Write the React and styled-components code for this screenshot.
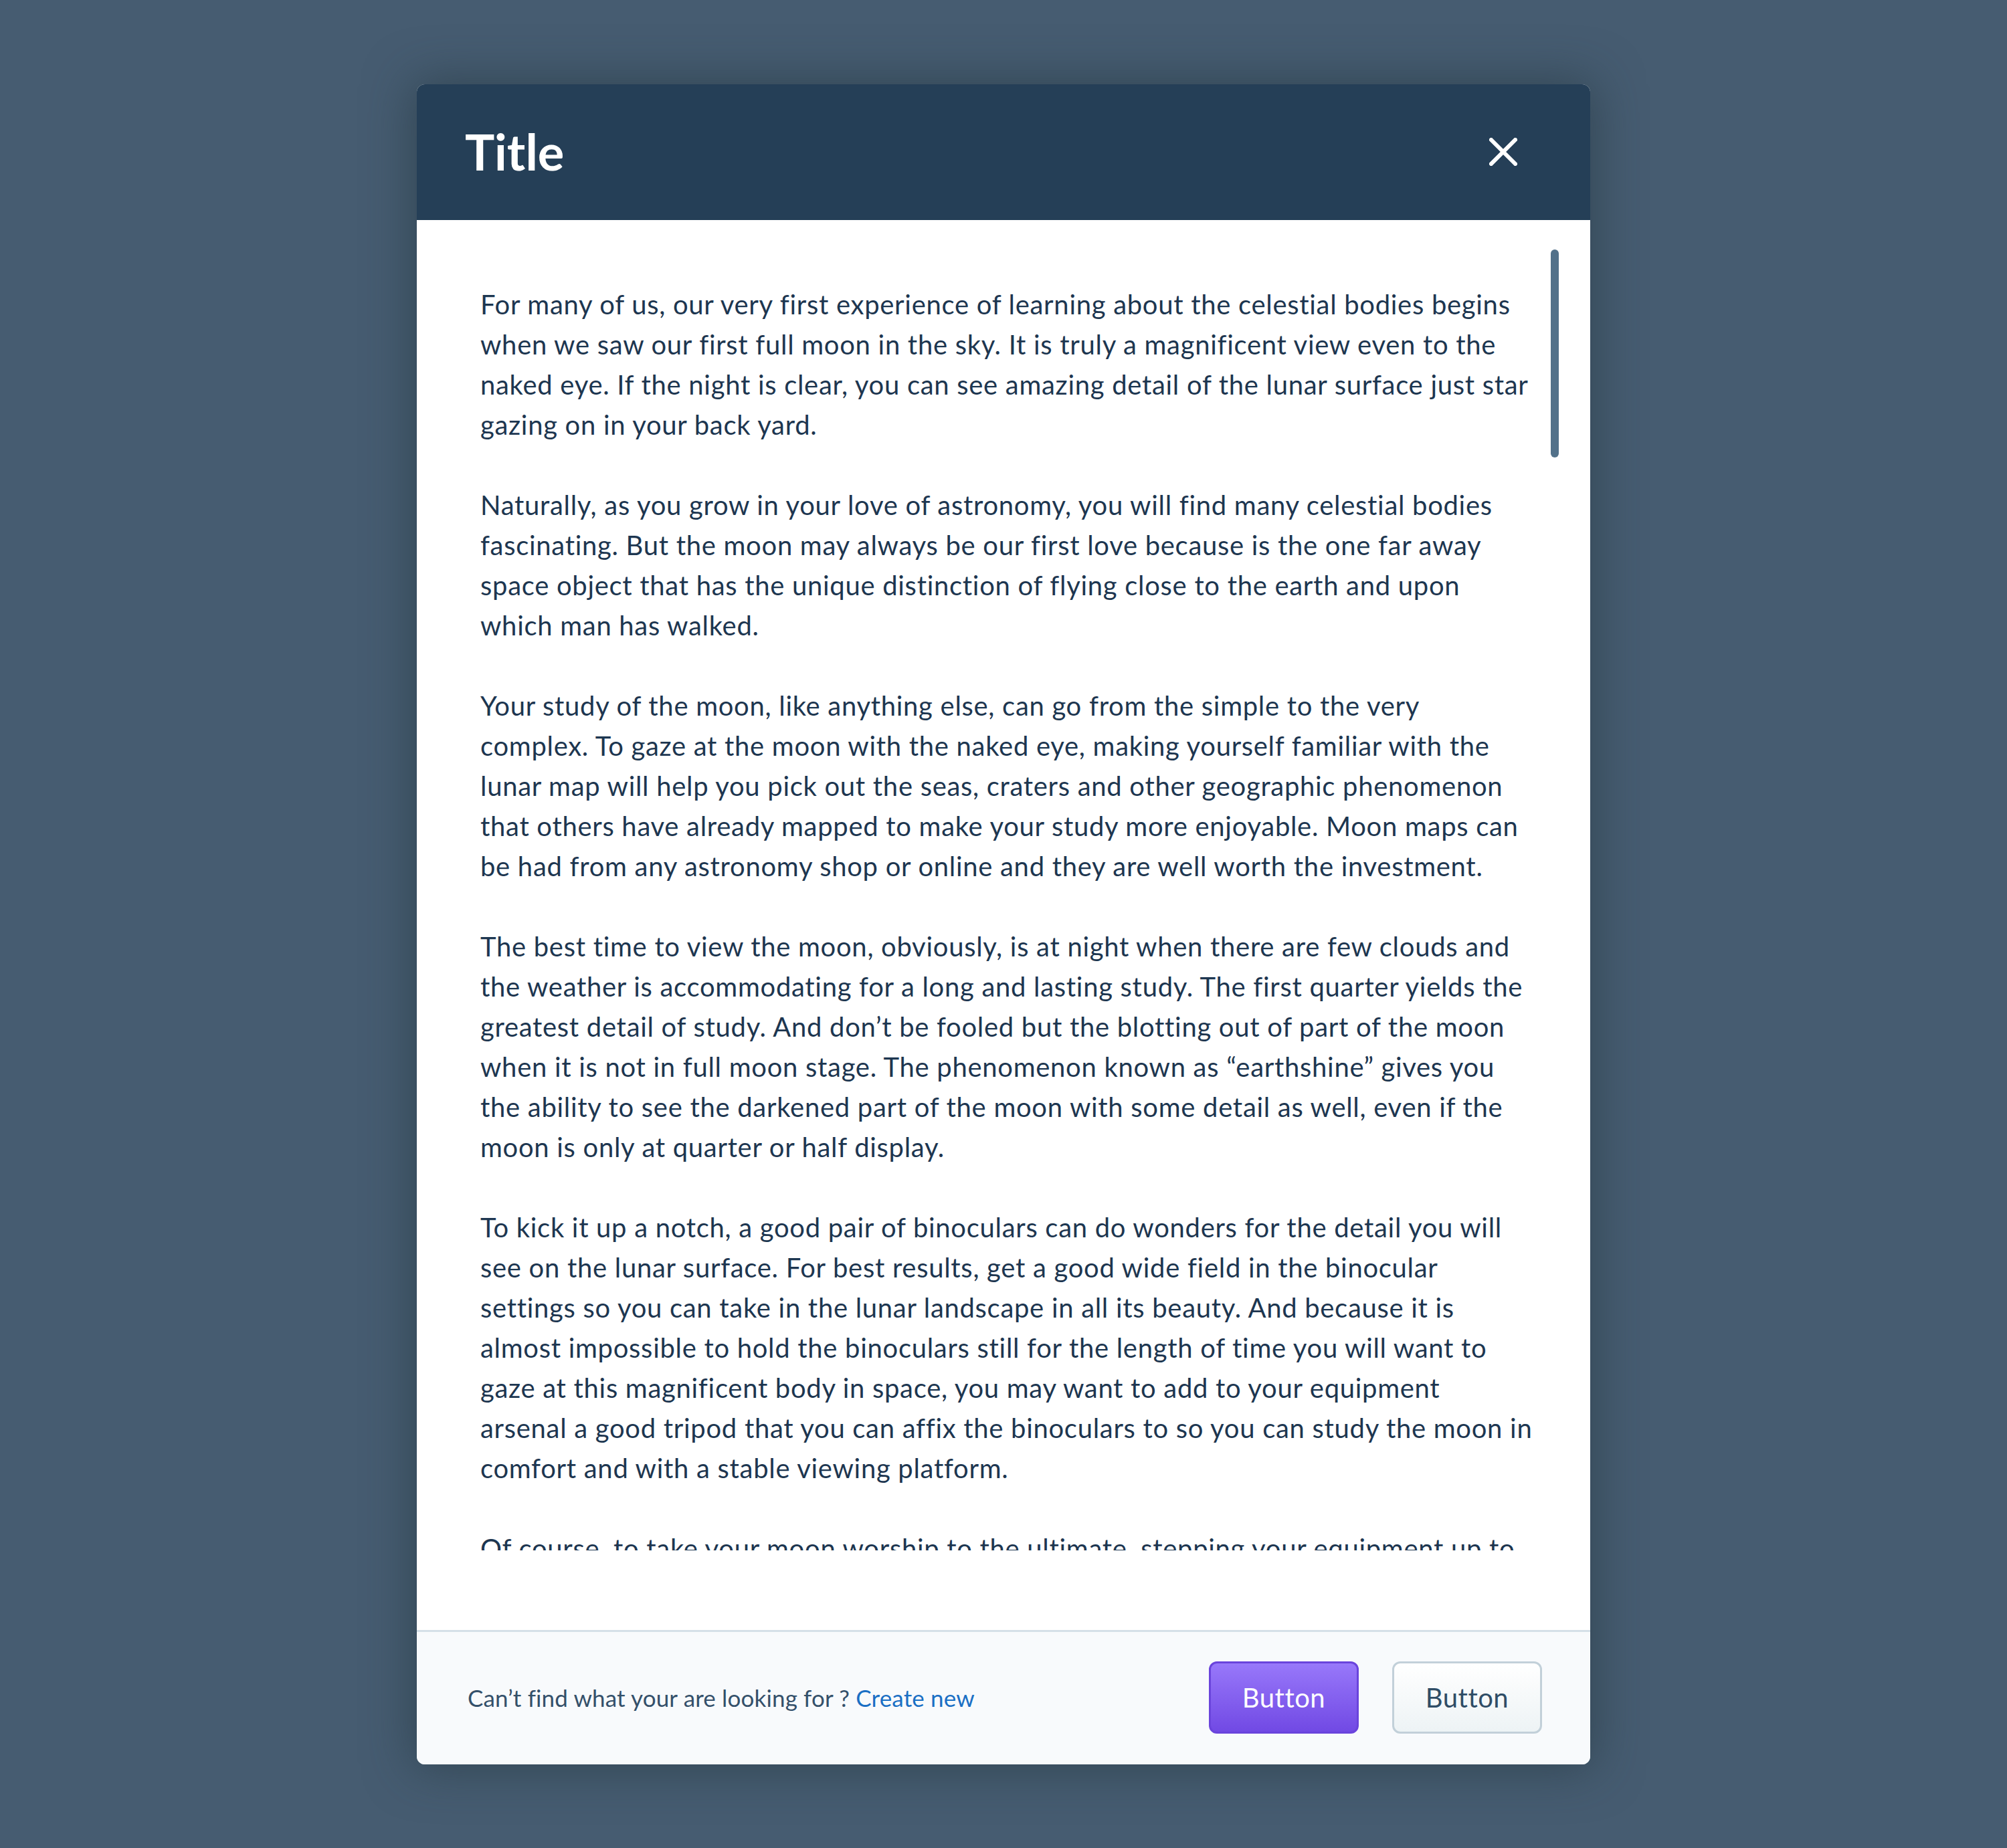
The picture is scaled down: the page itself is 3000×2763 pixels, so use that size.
import React from 'react';
import styled, { createGlobalStyle } from 'styled-components';

const GlobalStyle = createGlobalStyle`
    html, body {
        margin: 0;
        padding: 0;
    }
    body {
        background: #465c71;
        font-family: Lato, "Open Sans", sans-serif;
    }
`;

const Page = styled.div`
    display: flex;
    align-items: center;
    justify-content: center;
    width: 3000px;
    height: 2763px;
    background: #465c71;
`;

const Dialog = styled.section`
    display: flex;
    flex-direction: column;
    width: 1754px;
    height: 2512px;
    border-radius: 12px;
    overflow: hidden;
    background: #fff;
    box-shadow: 0 0 70px 6px rgba(34, 52, 60, 0.55);
`;

const Header = styled.header`
    display: flex;
    align-items: center;
    justify-content: space-between;
    flex: none;
    height: 203px;
    padding: 0 106px 0 72px;
    box-sizing: border-box;
    background: #253f57;
`;

const Title = styled.h1`
    margin: 0;
    font-family: Lato, sans-serif;
    font-weight: 700;
    font-size: 74px;
    line-height: 1;
    color: #fff;
`;

const CloseButton = styled.button`
    display: flex;
    align-items: center;
    justify-content: center;
    width: 48px;
    height: 48px;
    padding: 0;
    border: 0;
    background: transparent;
    cursor: pointer;
`;

const Body = styled.main`
    display: flex;
    flex: 1;
    gap: 26px;
    padding: 44px 47px 119px 95px;
    box-sizing: border-box;
    min-height: 0;
`;

const Viewport = styled.div`
    flex: 1;
    height: 1945px;
    overflow: hidden;
    padding-top: 52px;
    box-sizing: border-box;
`;

const Paragraph = styled.p`
    margin: 0 0 60px;
    font-family: Lato, sans-serif;
    font-size: 40px;
    line-height: 60px;
    letter-spacing: 0.7px;
    font-variant-ligatures: none;
    color: #1d3650;
`;

const Track = styled.div`
    flex: none;
    width: 12px;
`;

const Thumb = styled.div`
    height: 311px;
    border-radius: 6px;
    background: #52718a;
`;

const Footer = styled.footer`
    display: flex;
    align-items: center;
    justify-content: space-between;
    flex: none;
    height: 201px;
    padding: 0 72px 2px 76px;
    box-sizing: border-box;
    border-top: 3px solid #d5e0e8;
    background: #f8fafc;
`;

const Hint = styled.p`
    margin: 0;
    font-family: Lato, sans-serif;
    font-size: 35px;
    letter-spacing: 0.15px;
    font-variant-ligatures: none;
    color: #34506a;
`;

const Link = styled.a`
    color: #1a6fc4;
    text-decoration: none;
`;

const Actions = styled.div`
    display: flex;
    gap: 50px;
`;

const Button = styled.button`
    width: 224px;
    height: 108px;
    border-radius: 12px;
    font-family: Lato, sans-serif;
    font-size: 40px;
    letter-spacing: 0.5px;
    cursor: pointer;
    border: 3px solid ${({ primary }) => (primary ? '#6a44dc' : '#c2d0d9')};
    color: ${({ primary }) => (primary ? '#fff' : '#2f4d66')};
    background: ${({ primary }) =>
        primary
            ? 'linear-gradient(#9878fa, #7149e4)'
            : 'linear-gradient(#ffffff, #edf3f5)'};
`;

const paragraphs = [
    'For many of us, our very first experience of learning about the celestial bodies begins when we saw our first full moon in the sky. It is truly a magnificent view even to the naked eye. If the night is clear, you can see amazing detail of the lunar surface just star gazing on in your back yard.',
    'Naturally, as you grow in your love of astronomy, you will find many celestial bodies fascinating. But the moon may always be our first love because is the one far away space object that has the unique distinction of flying close to the earth and upon which man has walked.',
    'Your study of the moon, like anything else, can go from the simple to the very complex. To gaze at the moon with the naked eye, making yourself familiar with the lunar map will help you pick out the seas, craters and other geographic phenomenon that others have already mapped to make your study more enjoyable. Moon maps can be had from any astronomy shop or online and they are well worth the investment.',
    'The best time to view the moon, obviously, is at night when there are few clouds and the weather is accommodating for a long and lasting study. The first quarter yields the greatest detail of study. And don\u2019t be fooled but the blotting out of part of the moon when it is not in full moon stage. The phenomenon known as \u201cearthshine\u201d gives you the ability to see the darkened part of the moon with some detail as well, even if the moon is only at quarter or half display.',
    'To kick it up a notch, a good pair of binoculars can do wonders for the detail you will see on the lunar surface. For best results, get a good wide field in the binocular settings so you can take in the lunar landscape in all its beauty. And because it is almost impossible to hold the binoculars still for the length of time you will want to gaze at this magnificent body in space, you may want to add to your equipment arsenal a good tripod that you can affix the binoculars to so you can study the moon in comfort and with a stable viewing platform.',
    'Of course, to take your moon worship to the ultimate, stepping your equipment up to a good starter telescope will give you the most stunning detail of the lunar surface.',
];

const App = () => {
    return (
        <Page>
            <GlobalStyle />
            <Dialog>
                <Header>
                    <Title>Title</Title>
                    <CloseButton aria-label="close">
                        <svg width="42" height="42" viewBox="0 0 42 42">
                            <path d="M3 3 L39 39 M39 3 L3 39" stroke="#fff" strokeWidth="6" strokeLinecap="square" fill="none" />
                        </svg>
                    </CloseButton>
                </Header>
                <Body>
                    <Viewport>
                        {paragraphs.map((text, i) => (
                            <Paragraph key={i}>{text}</Paragraph>
                        ))}
                    </Viewport>
                    <Track>
                        <Thumb />
                    </Track>
                </Body>
                <Footer>
                    <Hint>
                        Can&rsquo;t find what your are looking for ? <Link href="#">Create new</Link>
                    </Hint>
                    <Actions>
                        <Button primary>Button</Button>
                        <Button>Button</Button>
                    </Actions>
                </Footer>
            </Dialog>
        </Page>
    );
};

export default App;
